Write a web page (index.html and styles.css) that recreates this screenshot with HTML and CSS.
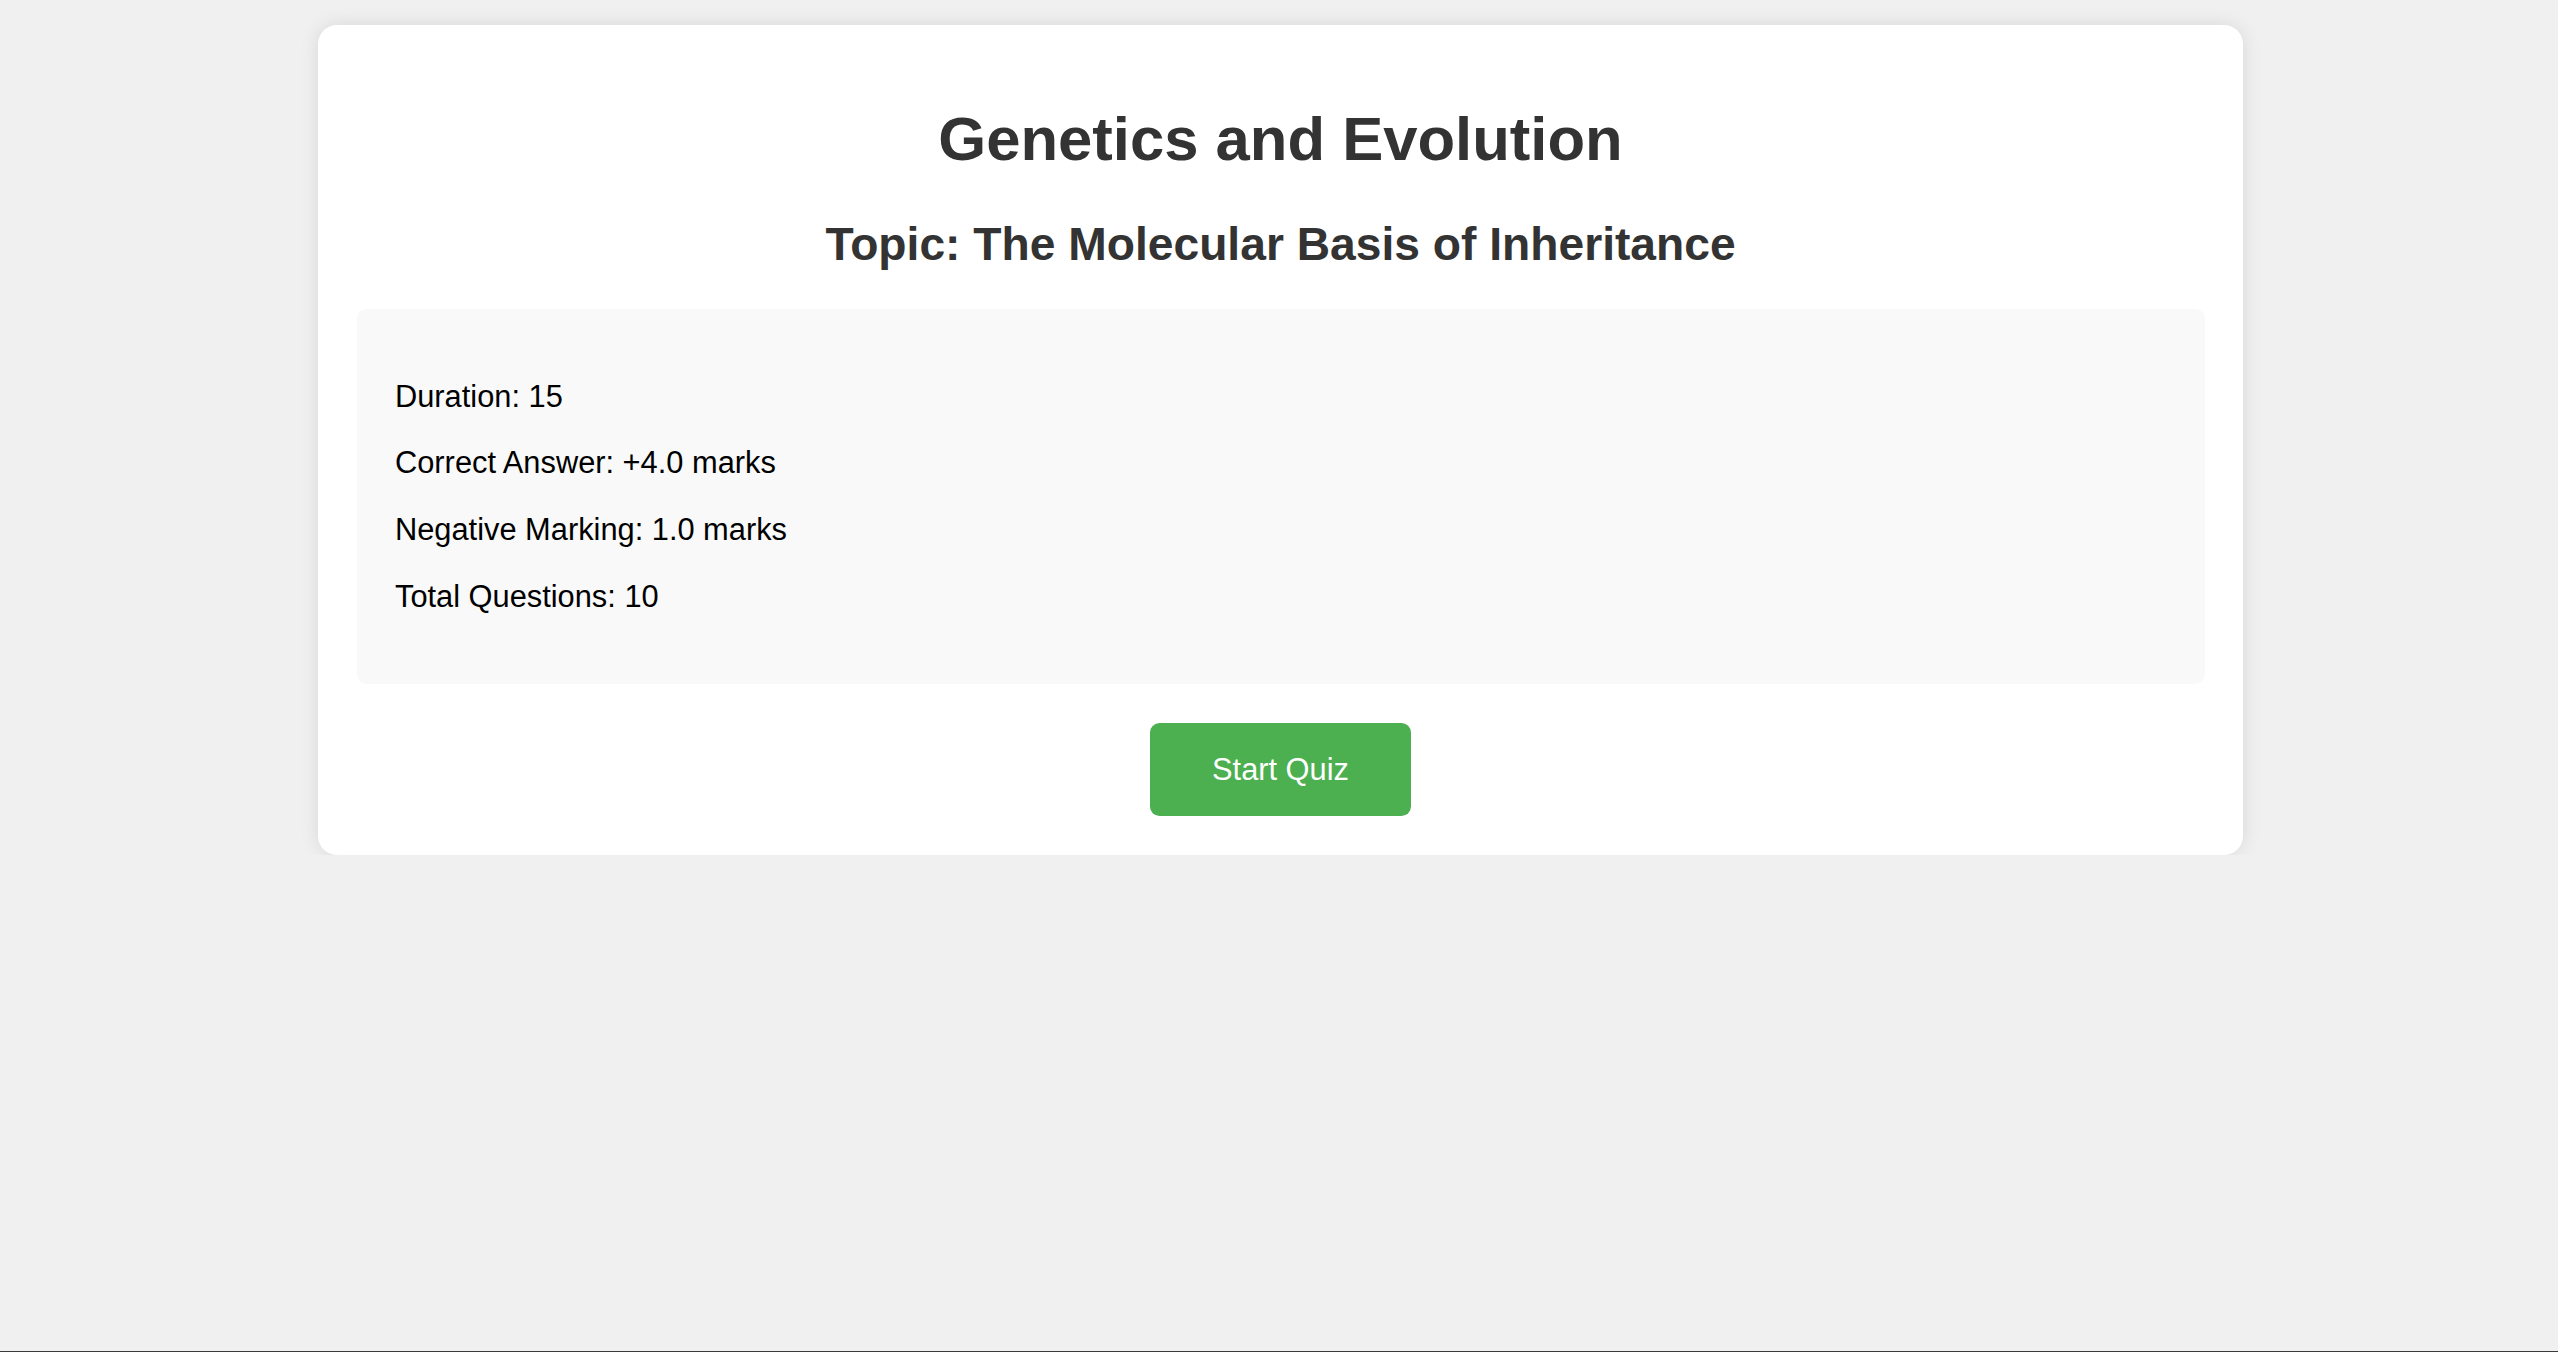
FILE: index.html
```html
<!DOCTYPE html>
<html lang="en">
<head>
<meta charset="utf-8">
<title>Genetics and Evolution</title>
<link rel="stylesheet" href="styles.css">
</head>
<body>
<main class="card">
  <h1 class="title">Genetics and Evolution</h1>
  <h2 class="topic">Topic: The Molecular Basis of Inheritance</h2>
  <section class="info">
    <p class="info-row">Duration: 15</p>
    <p class="info-row">Correct Answer: +4.0 marks</p>
    <p class="info-row">Negative Marking: 1.0 marks</p>
    <p class="info-row">Total Questions: 10</p>
  </section>
  <div class="actions">
    <button class="start-btn" type="button">Start Quiz</button>
  </div>
</main>
</body>
</html>
```

FILE: styles.css
```css
html {
  min-height: 100vh;
  box-sizing: border-box;
  border-bottom: 1px solid #3a3a3a;
  background: #f0f0f0;
}

body {
  margin: 0;
  padding: 25px 0 0 3px;
  background: #f0f0f0;
  font-family: "Liberation Sans", Arial, sans-serif;
  font-size: 30.8px;
  color: #000;
}

.card {
  width: 1925px;
  box-sizing: border-box;
  margin: 0 auto;
  padding: 38.5px;
  background: #fff;
  border-radius: 19px;
  box-shadow: 0 0 19px rgba(0, 0, 0, 0.1);
}

.title {
  margin: 39.5px 0 43px;
  font-size: 61.6px;
  font-weight: bold;
  text-align: center;
  color: #333;
}

.topic {
  margin: 38.3px 0;
  font-size: 46.2px;
  font-weight: bold;
  text-align: center;
  color: #333;
}

.info {
  padding: 38.5px;
  background: #f9f9f9;
  border-radius: 9.6px;
}

.info-row {
  margin: 30.8px 0;
}

.actions {
  display: flex;
  justify-content: center;
  margin-top: 38.5px;
}

.start-btn {
  padding: 28.8px 62px;
  border: none;
  border-radius: 9.6px;
  background: #4caf50;
  color: #fff;
  font-family: "Liberation Sans", Arial, sans-serif;
  font-size: 30.8px;
  cursor: pointer;
}
```
